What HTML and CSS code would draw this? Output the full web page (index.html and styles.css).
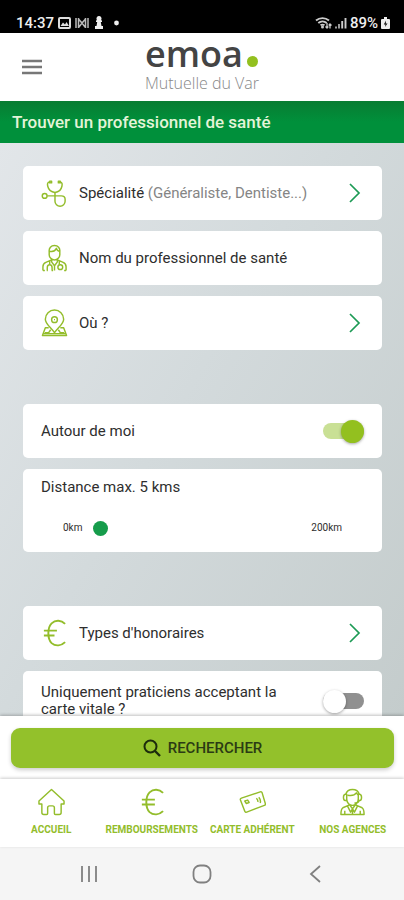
FILE: index.html
```html
<!DOCTYPE html>
<html lang="fr">
<head>
<meta charset="utf-8">
<meta name="viewport" content="width=device-width, initial-scale=1">
<title>emoa - Trouver un professionnel de santé</title>
<link rel="stylesheet" href="styles.css">
</head>
<body>
<div class="app">
  <div class="status">
    <div class="status-group">
      <span class="time">14:37</span>
      <svg width="13" height="12" viewBox="0 0 13 12"><rect x="1" y="1" width="11" height="10" rx="1" fill="none" stroke="#ddd" stroke-width="2"/><path d="M2.500 9 5 5.500 7 7.500 8.500 5 11 9z" fill="#ddd"/></svg>
      <svg width="14" height="12" viewBox="0 0 14 12"><path d="M1 1v10M3.500 1v10M3.500 2 7 6l3.500-4M10.500 1v10M13 1v10M4 10l3-4 3 4" fill="none" stroke="#bbb" stroke-width="1.500"/></svg>
      <svg class="pawn" width="8" height="13" viewBox="0 0 8 13"><path d="M4 0a2.500 2.500 0 0 1 2.200 3.700L7 5v1H5.800L6.500 10H8v3H0v-3h1.500L2.200 6H1V5l.8-1.300A2.500 2.500 0 0 1 4 0z" fill="#eee"/></svg>
      <svg width="5" height="12" viewBox="0 0 5 12"><circle cx="2.500" cy="6" r="2.400" fill="#eee"/></svg>
    </div>
    <div class="status-group status-right">
      <svg width="17" height="13" viewBox="0 0 17 13"><path d="M1 4.500a10 10 0 0 1 13 0M3.300 7a6.500 6.500 0 0 1 8.400 0M5.500 9.300a3.500 3.500 0 0 1 4 0" fill="none" stroke="#ccc" stroke-width="1.900"/><circle cx="7.500" cy="11" r="1.500" fill="#ccc"/><path d="M12 7v5m-1.500-1.500L12 12l1.300-1.500M15 12.500V8m-1.300 1.500L15 8l1.500 1.500" stroke="#ccc" stroke-width="1.300" fill="none"/></svg>
      <svg width="12" height="12" viewBox="0 0 12 12"><path d="M1 9.500v2M4 7v4.500" stroke="#aaa" stroke-width="1.800"/><path d="M7.200 4v7.500M10.500 1v10.500" stroke="#ccc" stroke-width="1.900"/></svg>
      <span>89%</span>
      <svg width="9" height="12" viewBox="0 0 9 12"><path d="M3 0h3v2h2q1 0 1 1v8q0 1-1 1H1q-1 0-1-1V3q0-1 1-1h2z" fill="#eee"/><path d="M5 3.500 2.800 7.500h1.700L4 10l2.500-3.500H4.800z" fill="#111"/></svg>
    </div>
  </div>

  <header class="header">
    <button class="menu" type="button" aria-label="Menu"><svg width="22" height="16" viewBox="0 0 22 16"><path d="M1 2h20M1 8h20M1 14h20" stroke="#777" stroke-width="2.400"/></svg></button>
    <div class="brand">
      <div class="brand-name">emoa<span class="brand-dot"></span></div>
      <div class="brand-sub">Mutuelle du Var</div>
    </div>
  </header>

  <h1 class="title">Trouver un professionnel de santé</h1>

  <main class="content">
    <section class="group">
      <button class="card" type="button">
        <svg class="icon" viewBox="0 0 28 28"><path d="M10 2.500H9C6.500 2.500 6.500 5 7 7c.8 3.500 3.500 6 7.500 6.500 4-.5 6.500-3 7.200-6.500.5-2 .3-4.500-2.200-4.500h-1"/><path d="M9 1.700h2v1.800H9zM18 1.700h2v1.800h-2zM14.500 13.500v9a5 5 0 0 0 10.500 0v-2c0-2.500-1.800-3.500-4-3.500H6.500"/><circle cx="3.800" cy="17" r="2.500"/></svg>
        <span class="label">Spécialité <span class="hint">(Généraliste, Dentiste...)</span></span>
        <svg class="chevron" viewBox="0 0 12 20"><path d="m1 1 9 9-9 9"/></svg>
      </button>
      <label class="card">
        <svg class="icon" viewBox="0 0 28 28"><path d="M8.500 7.500C8 3.500 10.500 1 14 1s6 2.500 5.500 6.500v3c0 3-2.500 5.500-5.500 5.500s-5.500-2.500-5.500-5.500zM9 7c4 1 6-1 7-3 .5 2 1.500 3 3.500 3M11 15v3l3 4 3-4v-3M11 16l-6 2.500C2.500 19.500 2 21 2 23v4M17 16l6 2.500c2.500 1 3 2.500 3 4.500v4M9 17v4M6.500 27v-3c0-4 5-4 5 0v3M14 22v5M19 17v4M7 27H6M12.500 27H11M24 27h2M2 27h2"/><circle cx="20" cy="23.500" r="2.500"/></svg>
        <input class="field" type="text" placeholder="Nom du professionnel de santé" aria-label="Nom du professionnel de santé">
      </label>
      <button class="card" type="button">
        <svg class="icon" viewBox="0 0 28 28"><path d="M14 24C10 18 4.500 15 4.500 10a9.500 9.500 0 0 1 19 0C23.500 15 18 18 14 24z"/><circle cx="14" cy="10.500" r="3"/><path d="M13.500 10.500h1M8 19H4.500L1.500 27h25l-3-8H20M4 24h4l2-3M24 24h-4l-2-3M3 25h22"/></svg>
        <span class="label">Où ?</span>
        <svg class="chevron" viewBox="0 0 12 20"><path d="m1 1 9 9-9 9"/></svg>
      </button>
    </section>

    <section class="group">
      <label class="card">
        <span class="label">Autour de moi</span>
        <input class="switch" type="checkbox" role="switch" checked>
      </label>
      <div class="card distance">
        <label class="label" for="distance">Distance max. 5 kms</label>
        <div class="range"><span>0km</span><input id="distance" type="range" min="0" max="200" value="5"><span>200km</span></div>
      </div>
    </section>

    <section class="group">
      <button class="card" type="button">
        <svg class="icon" viewBox="0 0 28 28"><path class="thick" d="M25 4.500C21 .5 15 .2 11 4c-4.500 4.500-4.500 16 0 20.500 4 3.500 10 3 14-1M3 11.500h13.500M3 16.500h11"/></svg>
        <span class="label">Types d'honoraires</span>
        <svg class="chevron" viewBox="0 0 12 20"><path d="m1 1 9 9-9 9"/></svg>
      </button>
      <label class="card card-tall">
        <span class="label">Uniquement praticiens acceptant la carte vitale ?</span>
        <input class="switch" type="checkbox" role="switch">
      </label>
    </section>
  </main>

  <div class="actions">
    <button class="search" type="button"><svg width="18" height="18" viewBox="0 0 18 18"><circle cx="7.500" cy="7.500" r="6" fill="none" stroke="#1c2b0c" stroke-width="2"/><path d="m12 12 5 5" stroke="#1c2b0c" stroke-width="2.400"/></svg>RECHERCHER</button>
  </div>

  <nav class="tabs">
    <a href="#accueil"><svg class="icon" viewBox="0 0 28 28"><path d="M14 1 1 13v3h3v9q0 2 2 2h3q1 0 1-1v-6q0-2 2-2h3q2 0 2 2v6q0 1 1 1h4q2 0 2-2v-9h3v-3z"/></svg>ACCUEIL</a>
    <a href="#remboursements"><svg class="icon" viewBox="0 0 28 28"><path class="thick" d="M26 4.500C22 .5 16 .2 12 4c-4.500 4.500-4.500 16 0 20.500 4 3.500 10 3 14-1M4 11.500h13.500M4 16.500h13.500"/></svg>REMBOURSEMENTS</a>
    <a href="#carte"><svg class="icon" viewBox="0 0 28 28"><path d="M2.500 10 22 3.500q1.500-.5 2 1l3.300 11q.5 1.500-1 2L8 24.500q-1.500.5-2-1L1.500 12q-.5-1.500 1-2zM6 13l3-1 1.500 2.500-3 1zM18 10q2 2 1.500 4M20.500 9q2.500 3 1.500 6"/></svg>CARTE ADHÉRENT</a>
    <a href="#agences"><svg class="icon" viewBox="0 0 28 28"><path d="M7 6C8 2.500 10.500 1 14 1s6 1.500 7 5M8 7v4c0 4 3 6.500 6 6.500s6-2.500 6-6.500V7M9 7c5 1 8-1 9-2.500L20 7M8 6H6.500C4 6.500 4 12 6.500 12.500H8zM20 6h1.500c2.500.5 2.500 6 0 6.500H20zM21 12.500q-1 3-5 2.500M11 17l-7 3c-2 1-2 3-2 7h24c0-4 0-6-2-7l-7-3-3 4zM14 21v6M9 18.500l3 6 2-3.500 2 3.500 3-6M6 23v4M22 23v4"/></svg>NOS AGENCES</a>
  </nav>

  <div class="system">
    <button type="button" aria-label="Applications récentes"><svg width="18" height="18" viewBox="0 0 18 18"><path d="M2 1v16M9 1v16M16 1v16"/></svg></button>
    <button type="button" aria-label="Accueil"><svg width="20" height="20" viewBox="0 0 20 20"><rect x="1.500" y="1.500" width="17" height="17" rx="6.500"/></svg></button>
    <button type="button" aria-label="Retour"><svg width="18" height="18" viewBox="0 0 18 18"><path d="M14 1 5 9l9 8"/></svg></button>
  </div>
</div>
</body>
</html>
```
FILE: styles.css
```css
* {
  box-sizing: border-box;
}

body {
  margin: 0;
  font-family: Roboto, "Liberation Sans", sans-serif;
  font-size: 15px;
  color: #2e2e2e;
}

button,
input {
  font: inherit;
  color: inherit;
}

button {
  border: 0;
  padding: 0;
  background: none;
  cursor: pointer;
}

svg {
  flex: none;
  display: block;
}

.app {
  height: 100vh;
  display: flex;
  flex-direction: column;
  background: #fff;
}

.status {
  flex: none;
  height: 33px;
  padding: 12px 14px 0 16px;
  display: flex;
  align-items: center;
  justify-content: space-between;
  background: #000;
  color: #eee;
  font-weight: 500;
  line-height: 20px;
}

.status-group {
  display: flex;
  align-items: center;
  gap: 4px;
}

.status-right {
  gap: 3px;
}

.pawn {
  margin: 0 7px 0 2px;
}

.header {
  flex: none;
  height: 68px;
  padding: 0 21px;
  display: grid;
  grid-template-columns: 1fr auto 1fr;
  align-items: center;
}

.menu {
  justify-self: start;
}

.brand {
  padding-bottom: 4px;
}

.brand-name {
  font: 600 36px/36px "Open Sans", sans-serif;
  color: #444;
  display: flex;
  align-items: baseline;
  gap: 4px;
}

.brand-dot {
  width: 11px;
  height: 11px;
  border-radius: 50%;
  background: #93c01f;
}

.brand-sub {
  font: 300 16px/22px "Open Sans", sans-serif;
  color: #888;
}

.title {
  flex: none;
  margin: 0;
  height: 42px;
  padding: 0 12px;
  background: linear-gradient(#087c32, #00903b 50%);
  color: #e4f4d8;
  font-size: 17px;
  font-weight: 500;
  line-height: 42px;
}

.content {
  flex: 1;
  min-height: 0;
  overflow-y: auto;
  scrollbar-width: none;
  padding: 23px 22px 23px 23px;
  background: linear-gradient(120deg, #e2e6e9, #d3dadc 45%, #c4cccc);
}

.group {
  display: flex;
  flex-direction: column;
  gap: 11px;
}

.group + .group {
  margin-top: 54px;
}

.card {
  width: 100%;
  min-height: 54px;
  padding: 0 18px;
  display: flex;
  align-items: center;
  gap: 11px;
  border-radius: 5px;
  background: #fff;
  text-align: left;
}

.card-tall {
  min-height: 60px;
  gap: 36px;
}

.icon {
  width: 27px;
  height: 28px;
  fill: none;
  stroke: #93bd2b;
  stroke-width: 1.5;
  stroke-linejoin: round;
}

.thick {
  stroke-width: 2;
}

.label {
  flex: 1;
  line-height: 17px;
}

.hint {
  color: #858585;
}

.field {
  flex: 1;
  min-width: 0;
  border: 0;
  padding: 0;
  outline: 0;
  background: none;
}

.field::placeholder {
  color: #2e2e2e;
  opacity: 1;
}

.chevron {
  width: 12px;
  height: 20px;
  margin-right: 3px;
  fill: none;
  stroke: #1c9a55;
  stroke-width: 1.7;
}

.switch {
  appearance: none;
  flex: none;
  margin: 0;
  width: 41px;
  height: 23px;
  display: grid;
  align-items: center;
}

.switch::before,
.switch::after {
  content: "";
  grid-area: 1 / 1;
}

.switch::before {
  height: 16px;
  border-radius: 8px;
  background: #909090;
}

.switch::after {
  width: 23px;
  height: 23px;
  border-radius: 50%;
  background: #fff;
  box-shadow: 0 1px 3px rgba(0, 0, 0, 0.35);
}

.switch:checked::before {
  background: #c9e095;
}

.switch:checked::after {
  justify-self: end;
  background: #93c01f;
}

.distance {
  min-height: 83px;
  padding: 10px 18px 12px;
  flex-direction: column;
  align-items: stretch;
  gap: 20px;
}

.distance .label {
  flex: none;
}

.range {
  display: flex;
  align-items: center;
  padding: 0 22px;
  gap: 5px;
  font-size: 10px;
  line-height: 24px;
}

.range input {
  appearance: none;
  flex: 1;
  min-width: 0;
  height: 16px;
  margin: 0;
  background: none;
}

.range input::-webkit-slider-thumb {
  appearance: none;
  width: 15px;
  height: 15px;
  border-radius: 50%;
  background: #169c4b;
}

.actions {
  flex: none;
  padding: 12px 10px 11px 11px;
  background: #fff;
  box-shadow: 0 -1px 3px rgba(0, 0, 0, 0.25);
  z-index: 1;
}

.search {
  width: 100%;
  height: 40px;
  display: flex;
  align-items: center;
  justify-content: center;
  gap: 7px;
  border-radius: 9px;
  background: #93c12b;
  box-shadow: 0 2px 4px rgba(0, 0, 0, 0.2);
  color: #2b3b14;
  font-weight: 500;
}

.tabs {
  flex: none;
  height: 68px;
  padding: 0 1px;
  display: grid;
  grid-template-columns: repeat(4, 1fr);
  box-shadow: 0 -1px 3px rgba(0, 0, 0, 0.2);
  background: #fff;
  z-index: 2;
}

.tabs a {
  min-width: 0;
  display: flex;
  flex-direction: column;
  align-items: center;
  gap: 7px;
  padding-top: 9px;
  color: #93bd2b;
  font-size: 10px;
  font-weight: 700;
  line-height: 14px;
  text-decoration: none;
  white-space: nowrap;
}

.system {
  flex: none;
  height: 53px;
  padding: 0 32px;
  display: grid;
  grid-template-columns: repeat(3, 1fr);
  place-items: center;
  background: #f5f5f5;
}

.system svg {
  fill: none;
  stroke: #808080;
  stroke-width: 1.8;
}
```
